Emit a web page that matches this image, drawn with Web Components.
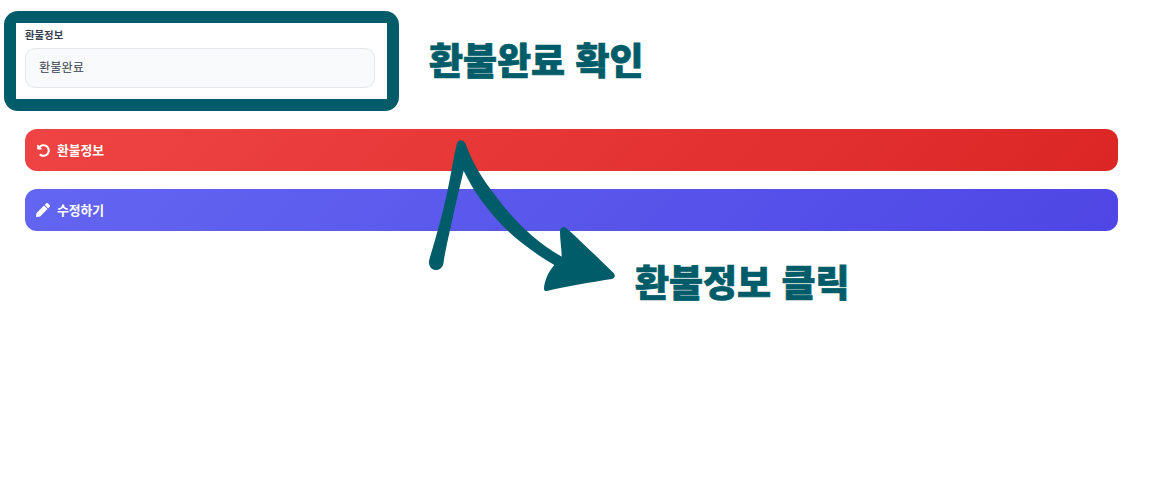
<!DOCTYPE html>
<html lang="ko">
<head>
    <meta charset="UTF-8" />
    <title>환불정보</title>
    <style>
        body {
            margin: 0;
            background: #fff;
            font-family: "Noto Sans CJK KR", "Noto Sans", sans-serif;
        }
    </style>
</head>
<body>
    <guide-page>
        <guide-top-row slot="top" note="환불완료 확인">
            <info-field label="환불정보" value="환불완료"></info-field>
        </guide-top-row>
        <action-button slot="actions" color="red" label="환불정보">
            <svg viewBox="0 0 512 512" width="13" height="13" fill="#fff"><path d="M255.545 8c-66.269.119-126.438 26.233-170.86 68.685L48.971 40.971C33.851 25.851 8 36.559 8 57.941V192c0 13.255 10.745 24 24 24h134.059c21.382 0 32.09-25.851 16.971-40.971l-41.75-41.75c30.864-28.899 70.801-44.907 113.23-45.273 92.398-.798 170.283 73.977 169.484 169.442C423.236 348.009 349.816 424 256 424c-41.127 0-79.997-14.678-110.63-41.556-4.743-4.161-11.906-3.908-16.368.553L89.34 422.659c-4.872 4.872-4.631 12.815.482 17.433C133.798 479.813 192.074 504 256 504c136.966 0 247.999-111.033 248-247.998C504.001 119.193 392.354 7.755 255.545 8z"/></svg>
        </action-button>
        <action-button slot="actions" color="indigo" label="수정하기">
            <svg viewBox="0 0 512 512" width="14" height="14" fill="#fff"><path d="M497.9 142.1l-46.1 46.1c-4.7 4.7-12.3 4.7-17 0l-111-111c-4.7-4.7-4.7-12.3 0-17l46.1-46.1c18.7-18.7 49.1-18.7 67.9 0l60.1 60.1c18.8 18.7 18.8 49.1 0 67.9zM284.2 99.8L21.6 362.4.4 483.9c-2.9 16.4 11.4 30.6 27.8 27.8l121.5-21.3 262.6-262.6c4.7-4.7 4.7-12.3 0-17l-111-111c-4.8-4.7-12.4-4.7-17.1 0z"/></svg>
        </action-button>
        <guide-arrow slot="overlay" note="환불정보 클릭"></guide-arrow>
    </guide-page>

    <template id="guide-page-template">
        <style>
            :host {
                display: block;
                position: relative;
                height: 500px;
                overflow: hidden;
                box-sizing: border-box;
                padding-top: 11px;
            }
            .actions {
                display: flex;
                flex-direction: column;
                gap: 18px;
                margin: 18px 47px 0 25px;
            }
        </style>
        <slot name="top"></slot>
        <div class="actions"><slot name="actions"></slot></div>
        <slot name="overlay"></slot>
    </template>

    <template id="guide-top-row-template">
        <style>
            :host {
                display: flex;
                align-items: center;
                gap: 30px;
                margin-left: 4px;
            }
            .frame {
                box-sizing: border-box;
                width: 395px;
                height: 100px;
                padding: 12px;
                border-radius: 14px;
                background: #005c68;
            }
            .inner {
                box-sizing: border-box;
                height: 100%;
                background: #fff;
                padding: 0 12px 0 9px;
            }
            .note {
                font-size: 37px;
                line-height: 44px;
                font-weight: 900;
                color: #005c68;
                -webkit-text-stroke: 0.7px #005c68;
                white-space: nowrap;
                margin-bottom: 4px;
            }
        </style>
        <div class="frame"><div class="inner"><slot></slot></div></div>
        <div class="note"></div>
    </template>

    <template id="info-field-template">
        <style>
            :host {
                display: block;
                height: 100%;
            }
            .label {
                display: block;
                font-size: 10.4px;
                line-height: 14px;
                font-weight: 700;
                color: #374151;
                padding-top: 5px;
                margin-bottom: 6px;
            }
            .value {
                box-sizing: border-box;
                height: 40px;
                display: flex;
                align-items: center;
                padding: 0 13px 3px;
                border: 1px solid #e5e7eb;
                border-radius: 10px;
                background: #f9fafb;
                font-size: 12.2px;
                color: #374151;
            }
        </style>
        <span class="label"></span>
        <div class="value"></div>
    </template>

    <template id="action-button-template">
        <style>
            :host {
                display: flex;
                align-items: center;
                gap: 7px;
                box-sizing: border-box;
                height: 42px;
                padding: 0 0 0 11px;
                border-radius: 12px;
                color: #fff;
                font-size: 12.8px;
                font-weight: 700;
            }
            :host([color="red"]) {
                background: linear-gradient(135deg, #ef4444, #dc2626);
            }
            :host([color="indigo"]) {
                background: linear-gradient(135deg, #6366f1, #4f46e5);
            }
            .icon {
                display: flex;
                width: 14px;
                justify-content: center;
            }
            .text {
                position: relative;
                top: -1px;
            }
        </style>
        <span class="icon"><slot></slot></span>
        <span class="text"></span>
    </template>

    <template id="guide-arrow-template">
        <style>
            :host {
                display: block;
            }
            svg {
                position: absolute;
                left: 420px;
                top: 130px;
            }
            .note {
                position: absolute;
                left: 635px;
                top: 259px;
                font-size: 37px;
                line-height: 44px;
                font-weight: 900;
                color: #005c68;
                -webkit-text-stroke: 0.7px #005c68;
                white-space: nowrap;
            }
        </style>
        <svg width="210" height="170" viewBox="0 0 630 510">
            <path fill="#005c68" d="M27 392 C25 412 38 421 50 420 C62 419 69 410 71 396 C73 375 88 310 100 255 C112 200 122 160 131 122 C150 160 170 195 200 232 C240 285 300 345 403 405 C385 425 372 455 372 478 C373 484 378 484 384 482 C440 468 510 458 575 447 C586 444 587 435 580 428 C535 385 485 335 441 296 C432 288 420 292 420 305 C420 330 425 355 425 380 C340 330 280 270 225 195 C190 150 160 105 137 42 C132 28 116 26 111 40 C100 85 92 140 80 195 C65 265 45 330 27 392 Z"/>
        </svg>
        <div class="note"></div>
    </template>

    <script>
        // Base class, clones the template into an open shadow root
        class ShadowComponent extends HTMLElement {
            constructor() {
                super();
                this.attachShadow({ mode: 'open' });
            }

            connectedCallback() {
                const template = document.getElementById(this.templateId);
                this.shadowRoot.appendChild(template.content.cloneNode(true));
                this.render();
            }

            render() {}
        }

        class GuidePage extends ShadowComponent {
            get templateId() { return 'guide-page-template'; }
        }

        class GuideTopRow extends ShadowComponent {
            get templateId() { return 'guide-top-row-template'; }

            render() {
                this.shadowRoot.querySelector('.note').textContent = this.getAttribute('note');
            }
        }

        class InfoField extends ShadowComponent {
            get templateId() { return 'info-field-template'; }

            render() {
                this.shadowRoot.querySelector('.label').textContent = this.getAttribute('label');
                this.shadowRoot.querySelector('.value').textContent = this.getAttribute('value');
            }
        }

        class ActionButton extends ShadowComponent {
            get templateId() { return 'action-button-template'; }

            render() {
                this.shadowRoot.querySelector('.text').textContent = this.getAttribute('label');
            }
        }

        class GuideArrow extends ShadowComponent {
            get templateId() { return 'guide-arrow-template'; }

            render() {
                this.shadowRoot.querySelector('.note').textContent = this.getAttribute('note');
            }
        }

        customElements.define('guide-page', GuidePage);
        customElements.define('guide-top-row', GuideTopRow);
        customElements.define('info-field', InfoField);
        customElements.define('action-button', ActionButton);
        customElements.define('guide-arrow', GuideArrow);
    </script>
</body>
</html>
